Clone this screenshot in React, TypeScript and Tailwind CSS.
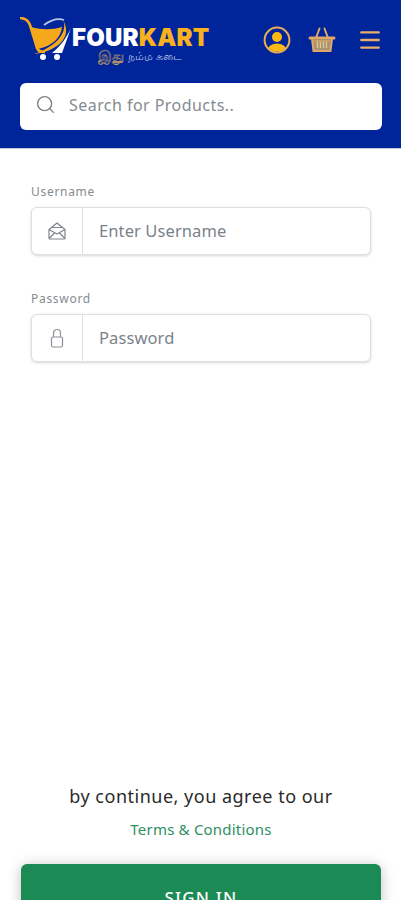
import React from 'react';
import { Search, Menu } from 'lucide-react';

function Logo() {
  return (
    <div className="flex items-start">
      <svg width="54" height="46" viewBox="0 0 54 46" className="shrink-0">
        <path d="M0 1 C5 1 8 3 10 8 L17 31 C18 34 20 35 25 35" fill="none" stroke="#f5a81c" strokeWidth="2.6" />
        <path d="M11 10 C22 13 32 13 42 10 C41 20 33 29 18 32 Z" fill="#f5a81c" />
        <path d="M24 8 C31 3 38 1 44 3" fill="none" stroke="#b9c6e6" strokeWidth="1.8" />
        <path d="M43 3 C48 14 38 29 14 37 C34 35 54 22 43 3 Z" fill="#f5a81c" />
        <path d="M51 11 L42 36 L32 36 C40 30 47 20 51 11 Z" fill="#ffffff" />
        <circle cx="23" cy="40" r="3" fill="#ffffff" />
        <circle cx="37" cy="40" r="3" fill="#ffffff" />
      </svg>
      <div className="flex flex-col items-center -ml-[2px] mt-[10px]">
        <div className="font-['Inter',sans-serif] text-[24px] font-black leading-[22px] tracking-[0.2px] whitespace-nowrap">
          <span className="text-white">FOUR</span>
          <span className="text-[#f9b21d]">KART</span>
        </div>
        <div className="mt-[1px] -ml-[2px] flex items-center gap-[4px] whitespace-nowrap font-['Noto_Sans',sans-serif] text-[11px] leading-[12px] text-[#b7c3e2]">
          <span className="text-[14px] font-bold text-[#c9a45c]">இது</span>
          <span>நம்ம கடை</span>
        </div>
      </div>
    </div>
  );
}

function UserIcon() {
  return (
    <svg width="28" height="28" viewBox="0 0 28 28">
      <defs>
        <clipPath id="ring">
          <circle cx="14" cy="14" r="11.5" />
        </clipPath>
      </defs>
      <circle cx="14" cy="11" r="5" fill="#fdb913" />
      <ellipse cx="14" cy="24" rx="9.5" ry="6.5" fill="#fdb913" clipPath="url(#ring)" />
      <circle cx="14" cy="14" r="12.4" fill="none" stroke="#e8ab57" strokeWidth="2" />
    </svg>
  );
}

function BasketIcon() {
  return (
    <svg width="28" height="28" viewBox="0 0 28 28" fill="none" stroke="#e0a868" strokeWidth="2">
      <path d="M8 12 L11.5 2.5 M20 12 L16.5 2.5" strokeLinecap="round" />
      <path d="M2 12 H26" strokeWidth="3" strokeLinecap="round" />
      <path d="M4 13 L5.5 25 H22.5 L24 13" fill="#a9926e" />
      <path d="M9.5 16 V22 M12.5 16 V22 M15.5 16 V22 M18.5 16 V22" stroke="#e0c49a" strokeWidth="1.4" />
      <path d="M6.5 15 H21.5" strokeWidth="1.2" />
    </svg>
  );
}

function EnvelopeIcon() {
  return (
    <svg width="20" height="20" viewBox="0 0 20 20" fill="none" stroke="#7f858b" strokeWidth="1.2" strokeLinejoin="round">
      <path d="M2 8.5 L10 2 L18 8.5 V17 A1 1 0 0 1 17 18 H3 A1 1 0 0 1 2 17 Z" />
      <path d="M5 6.5 H15 M2 8.5 L10 13 L18 8.5 M2 17.5 L8 11.5 M18 17.5 L12 11.5" />
    </svg>
  );
}

function PadlockIcon() {
  return (
    <svg width="14" height="20" viewBox="0 0 14 20" fill="none" stroke="#8b9095" strokeWidth="1.2">
      <rect x="1.5" y="9" width="11" height="10" rx="1.5" />
      <path d="M3.5 9 V5 A3.5 3.5 0 0 1 10.5 5 V9" />
    </svg>
  );
}

function Field({ label, placeholder, icon }: { label: string; placeholder: string; icon: React.ReactNode }) {
  return (
    <div>
      <div className="text-[12px] leading-[16px] tracking-[0.7px] text-[#868b8f] mb-[7px]">{label}</div>
      <div className="flex h-[48px] rounded-[6px] border border-[#dcdfe3] bg-white shadow-[0_1px_3px_rgba(0,0,0,0.16)]">
        <div className="flex w-[51px] items-center justify-center border-r border-[#dcdfe3]">{icon}</div>
        <div className="flex items-center pl-[16px] text-[16.5px] tracking-[0.1px] text-[#7a828a]">{placeholder}</div>
      </div>
    </div>
  );
}

export default function App() {
  return (
    <div className="flex h-[900px] flex-col overflow-hidden bg-white font-['Noto_Sans',sans-serif]">
      <header className="h-[149px] shrink-0 border-b border-[#c3c8da] bg-[#00259b] pl-[20px] pr-[19px]">
        <div className="flex h-[83px] items-start justify-between pt-[17px]">
          <Logo />
          <div className="flex items-center pt-[9px] -mr-[1px]">
            <UserIcon />
            <div className="ml-[17px]">
              <BasketIcon />
            </div>
            <Menu size={26} strokeWidth={2.2} className="ml-[21px] text-[#e8ab6a]" />
          </div>
        </div>
        <div className="flex h-[47px] items-center rounded-[6px] bg-white pl-[15px] pb-[4px]">
          <Search size={21} strokeWidth={1.6} className="text-[#7d8388]" />
          <span className="ml-[13px] text-[16px] tracking-[0.45px] text-[#858b90]">Search for Products..</span>
        </div>
      </header>

      <main className="flex flex-col gap-[36px] pl-[31px] pr-[30px] pt-[35px]">
        <Field label="Username" placeholder="Enter Username" icon={<EnvelopeIcon />} />
        <Field label="Password" placeholder="Password" icon={<PadlockIcon />} />
      </main>

      <footer className="mt-auto pl-[21px] pr-[20px]">
        <p className="text-center text-[18px] leading-[24px] tracking-[0.5px] text-[#2a2a2a]">by continue, you agree to our</p>
        <p className="mt-[11px] text-center text-[15px] leading-[20px] tracking-[0.2px] text-[#2f8f63]">Terms &amp; Conditions</p>
        <button className="mt-[25px] -mb-[26px] flex h-[62px] w-full items-center justify-center rounded-[6px] bg-[#1b8a55] pt-[6px] text-[17px] font-medium tracking-[1.2px] text-white shadow-[0_2px_14px_rgba(0,0,0,0.25)]">
          SIGN IN
        </button>
      </footer>
    </div>
  );
}
